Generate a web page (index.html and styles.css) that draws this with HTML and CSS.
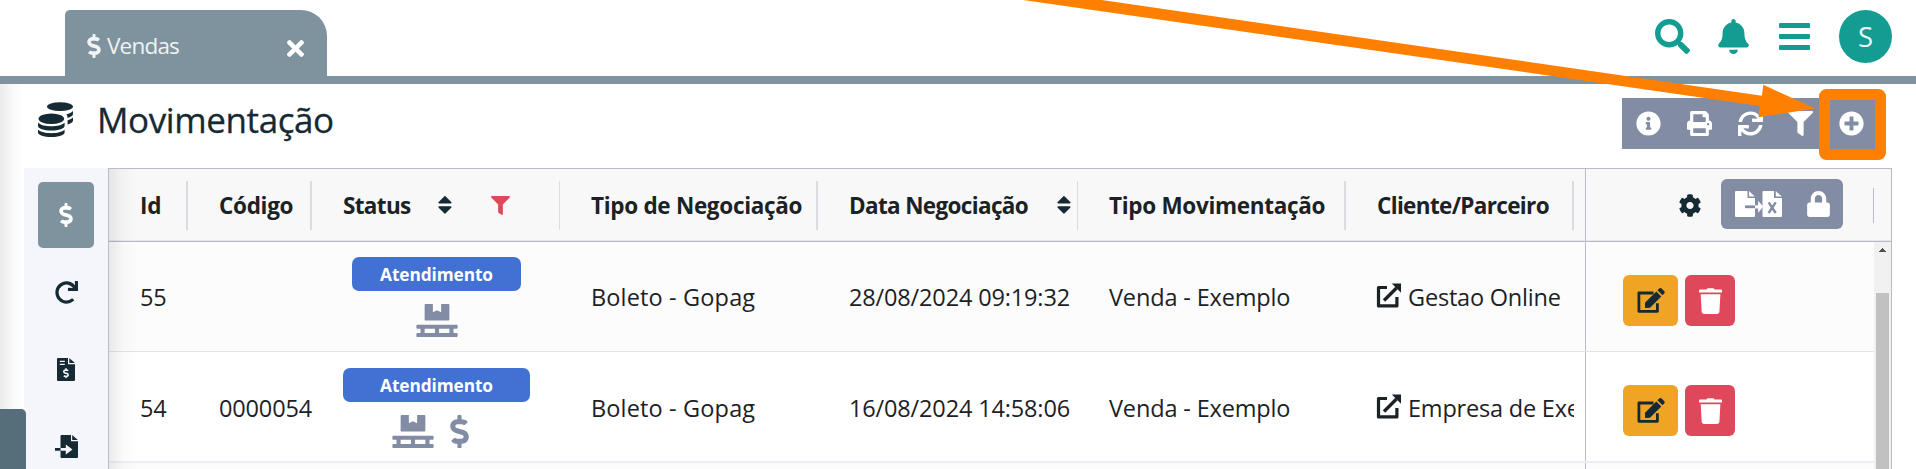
FILE: index.html
```
<!DOCTYPE html>
<html lang="pt-BR">
<head>
<meta charset="utf-8">
<title>Vendas - Movimentação</title>
<link rel="stylesheet" href="styles.css">
</head>
<body>
<svg class="defs" aria-hidden="true">
  <symbol id="dollar" viewBox="0 0 288 512"><path d="M209.2 233.4l-108-31.6C88.7 198.2 80 186.5 80 173.5c0-16.3 13.2-29.5 29.5-29.5h66.3c12.2 0 24.2 3.7 34.2 10.5 6.1 4.1 14.3 3.1 19.5-2l34.8-34c7.1-6.9 6.1-18.4-1.8-24.5C238 74.8 207.4 64.1 176 64V16c0-8.8-7.2-16-16-16h-32c-8.8 0-16 7.2-16 16v48h-2.5C45.8 64-5.4 118.7.5 183.6c4.2 46.1 39.4 83.6 83.8 96.6l102.5 30c12.5 3.7 21.2 15.3 21.2 28.3 0 16.3-13.2 29.5-29.5 29.5h-66.3C100 368 88 364.3 78 357.5c-6.1-4.1-14.3-3.1-19.5 2l-34.8 34c-7.1 6.9-6.1 18.4 1.8 24.5 24.5 19.2 55.1 29.9 86.5 30v48c0 8.8 7.2 16 16 16h32c8.8 0 16-7.2 16-16v-48.2c46.6-.9 90.3-28.6 105.7-72.7 21.5-61.6-14.6-124.8-72.5-141.7z"/></symbol>
  <symbol id="times" viewBox="0 0 352 352"><path transform="translate(0 -80)" d="M242.72 256l100.07-100.07c12.28-12.28 12.28-32.19 0-44.48l-22.24-22.24c-12.28-12.28-32.19-12.28-44.48 0L176 189.28 75.93 89.21c-12.28-12.28-32.19-12.28-44.48 0L9.21 111.45c-12.28 12.28-12.28 32.19 0 44.48L109.28 256 9.21 356.07c-12.28 12.28-12.28 32.19 0 44.48l22.24 22.24c12.28 12.28 32.2 12.28 44.48 0L176 322.72l100.07 100.07c12.28 12.28 32.2 12.28 44.48 0l22.24-22.24c12.28-12.28 12.28-32.19 0-44.48L242.72 256z"/></symbol>
  <symbol id="pallet" viewBox="0 0 640 512"><path d="M144 256h352c8.800 0 16-7.200 16-16V16c0-8.800-7.200-16-16-16H384v128l-64-32-64 32V0H144c-8.800 0-16 7.200-16 16v224c0 8.800 7.200 16 16 16zm480 128c8.800 0 16-7.200 16-16v-32c0-8.800-7.200-16-16-16H16c-8.800 0-16 7.200-16 16v32c0 8.800 7.200 16 16 16h48v64H16c-8.800 0-16 7.200-16 16v32c0 8.800 7.200 16 16 16h608c8.800 0 16-7.200 16-16v-32c0-8.800-7.200-16-16-16h-48v-64h48zm-336 64H128v-64h160v64zm224 0H352v-64h160v64z"/></symbol>
  <symbol id="filter" viewBox="0 0 512 512"><path d="M487.976 0H24.028C2.71 0-8.047 25.866 7.058 40.971L192 225.941V432c0 7.831 3.821 15.17 10.237 19.662l80 55.98C298.02 518.69 320 507.493 320 487.98V225.941l184.947-184.97C520.021 25.896 509.338 0 487.976 0z"/></symbol>
  <symbol id="sort" viewBox="0 0 14 18"><path d="M6.200.4a1 1 0 0 1 1.500 0l5.500 5.700c.7.700.3 1.500-.6 1.500H1.300c-.9 0-1.300-.8-.6-1.500zM1.300 10.300h11.300c.9 0 1.300.8.600 1.500l-5.500 5.500a1 1 0 0 1-1.500 0L.7 11.800c-.7-.7-.3-1.500.6-1.500z"/></symbol>
  <symbol id="external" viewBox="0 0 25 25"><path d="M11 4.500H2.500v18.400h18.400V14" fill="none" stroke="currentColor" stroke-width="3.200" stroke-linejoin="round"/><path d="M8 17.500 20.500 5" fill="none" stroke="currentColor" stroke-width="3.400"/><path d="M15.800.5H25v9.200z"/></symbol>
  <symbol id="edit" viewBox="0 0 28 25"><path d="M16.500 5H1.900v18.300h18.500v-8" fill="none" stroke="currentColor" stroke-width="2.800" stroke-linejoin="round"/><path d="M8 20v-5.200L19.300 3.500l5 5L13 19.800zM20.500 2.300l1.600-1.700c.8-.8 1.800-.8 2.500 0l2.500 2.500c.8.800.8 1.800 0 2.500l-1.600 1.700z"/></symbol>
  <symbol id="trash" viewBox="0 0 23 26"><path d="M1 1.500h6.500L8.300.3h6.400l.8 1.200H22a1 1 0 0 1 1 1v2H0v-2a1 1 0 0 1 1-1zM1.700 6.200h19.700l-1 17.600c-.1 1.300-1 2.200-2.300 2.200H5c-1.300 0-2.200-.9-2.300-2.200z"/></symbol>
</svg>

<header class="topbar">
  <div class="tab">
    <svg class="tab-icon"><use href="#dollar"/></svg>
    <span class="tab-label">Vendas</span>
    <svg class="tab-close"><use href="#times"/></svg>
  </div>
  <nav class="top-actions">
    <svg class="ico-search" viewBox="0 0 512 512"><path d="M505 442.7L405.3 343c-4.500-4.500-10.600-7-17-7H372c27.600-35.300 44-79.700 44-128C416 93.100 322.900 0 208 0S0 93.100 0 208s93.100 208 208 208c48.300 0 92.700-16.400 128-44v16.300c0 6.400 2.500 12.500 7 17l99.700 99.700c9.400 9.400 24.600 9.400 33.900 0l28.300-28.300c9.400-9.400 9.400-24.600.1-34zM208 336c-70.700 0-128-57.200-128-128 0-70.700 57.200-128 128-128 70.700 0 128 57.200 128 128 0 70.700-57.200 128-128 128z"/></svg>
    <svg class="ico-bell" viewBox="0 0 448 512"><path d="M224 512c35.320 0 63.970-28.650 63.970-64H160.030c0 35.350 28.650 64 63.970 64zm215.390-149.710c-19.320-20.760-55.470-51.990-55.470-154.290 0-77.700-54.480-139.900-127.940-155.160V32c0-17.670-14.320-32-31.980-32s-31.980 14.330-31.980 32v20.840C118.560 68.100 64.080 130.300 64.080 208c0 102.300-36.150 133.530-55.470 154.290-6 6.450-8.660 14.160-8.610 21.710.11 16.400 12.980 32 32.100 32h383.800c19.120 0 32-15.600 32.100-32 .05-7.550-2.610-15.270-8.610-21.710z"/></svg>
    <svg class="ico-bars" viewBox="0 0 31 27"><rect width="31" height="5" rx="1"/><rect y="11" width="31" height="5" rx="1"/><rect y="22" width="31" height="5" rx="1"/></svg>
    <span class="avatar">S</span>
  </nav>
</header>

<div class="page">
  <aside class="edge"><div class="edge-handle"></div></aside>
  <main class="main">
    <div class="heading">
      <svg class="ico-coins" viewBox="0 0 35 35">
        <ellipse cx="22" cy="4.600" rx="13" ry="4.400"/>
        <path d="M28.300 12.300c3-.6 5.400-1.700 6.700-3.200v2.800c0 1.700-2.200 3.200-5.500 4 0-1.500-.3-2.600-1.200-3.600zM29.600 18.300c2.300-.6 4.300-1.500 5.400-2.700v2.800c0 1.700-2.200 3.200-5.400 4z"/>
        <ellipse cx="13.300" cy="16.700" rx="12.800" ry="5.300"/>
        <path d="M0 20.700c2.600 2.300 7.600 3.600 13.300 3.600s10.700-1.300 13.300-3.600v3.200c0 2.500-6 4.600-13.300 4.600S0 26.400 0 23.900zM0 27.800c2.600 2.100 7.600 3.400 13.300 3.400s10.700-1.300 13.300-3.400v2.600c0 2.500-6 4.600-13.300 4.600S0 32.900 0 30.400z"/>
      </svg>
      <h1>Movimentação</h1>
      <div class="toolbar">
        <svg viewBox="0 0 512 512"><path d="M256 8C119.043 8 8 119.083 8 256c0 136.997 111.043 248 248 248s248-111.003 248-248C504 119.083 392.957 8 256 8zm0 110c23.196 0 42 18.804 42 42s-18.804 42-42 42-42-18.804-42-42 18.804-42 42-42zm56 254c0 6.627-5.373 12-12 12h-88c-6.627 0-12-5.373-12-12v-24c0-6.627 5.373-12 12-12h12v-64h-12c-6.627 0-12-5.373-12-12v-24c0-6.627 5.373-12 12-12h64c6.627 0 12 5.373 12 12v100h12c6.627 0 12 5.373 12 12v24z"/></svg>
        <svg viewBox="0 0 512 512"><path d="M448 192V77.250c0-8.490-3.370-16.620-9.370-22.630L393.370 9.370c-6-6-14.140-9.370-22.630-9.370H96C78.330 0 64 14.330 64 32v160c-35.350 0-64 28.650-64 64v112c0 8.840 7.160 16 16 16h48v96c0 17.670 14.330 32 32 32h320c17.670 0 32-14.330 32-32v-96h48c8.840 0 16-7.160 16-16V256c0-35.350-28.650-64-64-64zm-64 256H128v-96h256v96zm0-224H128V64h192v48c0 8.840 7.160 16 16 16h48v96zm48 72c-13.250 0-24-10.750-24-24 0-13.260 10.750-24 24-24s24 10.740 24 24c0 13.250-10.750 24-24 24z"/></svg>
        <svg viewBox="0 0 512 512"><path d="M440.650 12.570l4 82.770A247.160 247.160 0 0 0 255.830 8C134.730 8 33.910 94.920 12.290 209.820A12 12 0 0 0 24.090 224h49.050a12 12 0 0 0 11.670-9.260 175.910 175.910 0 0 1 317-56.940l-101.460-4.860a12 12 0 0 0-12.570 12v47.410a12 12 0 0 0 12 12H500a12 12 0 0 0 12-12V12a12 12 0 0 0-12-12h-47.370a12 12 0 0 0-11.980 12.570zM255.830 432a175.610 175.610 0 0 1-146-77.800l101.800 4.870a12 12 0 0 0 12.570-12v-47.400a12 12 0 0 0-12-12H12a12 12 0 0 0-12 12V500a12 12 0 0 0 12 12h47.350a12 12 0 0 0 12-12.600l-4.150-82.570A247.170 247.170 0 0 0 255.830 504c121.110 0 221.930-86.920 243.550-201.820a12 12 0 0 0-11.800-14.180h-49.050a12 12 0 0 0-11.670 9.260A175.860 175.860 0 0 1 255.830 432z"/></svg>
        <svg><use href="#filter"/></svg>
        <svg viewBox="0 0 512 512"><path d="M256 8C119 8 8 119 8 256s111 248 248 248 248-111 248-248S393 8 256 8zm144 276c0 6.600-5.400 12-12 12h-92v92c0 6.600-5.400 12-12 12h-56c-6.600 0-12-5.400-12-12v-92h-92c-6.600 0-12-5.400-12-12v-56c0-6.600 5.400-12 12-12h92v-92c0-6.600 5.400-12 12-12h56c6.600 0 12 5.400 12 12v92h92c6.600 0 12 5.400 12 12v56z"/></svg>
      </div>
    </div>

    <div class="content">
      <nav class="sidebar">
        <span class="side-item active"><svg class="side-dollar"><use href="#dollar"/></svg></span>
        <span class="side-item"><svg class="side-redo" viewBox="0 0 512 512"><path d="M500.330 0h-47.410a12 12 0 0 0-12 12.570l4 82.760A247.420 247.420 0 0 0 256 8C119.340 8 7.900 119.530 8 256.190 8.100 393.070 119.100 504 256 504a247.100 247.100 0 0 0 166.180-63.910 12 12 0 0 0 .48-17.430l-34-34a12 12 0 0 0-16.380-.55A176 176 0 1 1 402.100 157.800l-101.530-4.870a12 12 0 0 0-12.570 12v47.410a12 12 0 0 0 12 12h200.330a12 12 0 0 0 12-12V12a12 12 0 0 0-12-12z"/></svg></span>
        <span class="side-item"><svg class="side-file" viewBox="0 0 18 23"><path fill-rule="evenodd" d="M1 0h10v6.200h7V22a1 1 0 0 1-1 1H1a1 1 0 0 1-1-1V1a1 1 0 0 1 1-1zM2.800 2.800v1.300h5V2.800zm0 3v1.300h5V5.800z"/><path d="M12.300 0 17.800 5h-5.500z"/><svg x="6" y="10" width="6" height="10.500" class="cut"><use href="#dollar"/></svg></svg></span>
        <span class="side-item"><svg class="side-import" viewBox="0 0 23 23"><path d="M6.500 0H16v6.200h7V22a1 1 0 0 1-1 1H6.500a1 1 0 0 1-1-1V1a1 1 0 0 1 1-1zM0 13h5.500v2.700H0z"/><path d="M17.200 0 22.800 5h-5.600z"/><path class="cut" d="M5.500 13h5.300V9.500l6.700 4.900-6.700 5v-3.700H5.500z"/></svg></span>
      </nav>

      <section class="grid">
        <div class="row head">
          <div class="cell">Id</div>
          <div class="cell">Código</div>
          <div class="cell thin tight">Status<svg class="sort sort-status"><use href="#sort"/></svg><svg class="filtered"><use href="#filter"/></svg></div>
          <div class="cell">Tipo de Negociação</div>
          <div class="cell thin tight">Data Negociação<svg class="sort sort-date"><use href="#sort"/></svg></div>
          <div class="cell">Tipo Movimentação</div>
          <div class="cell tight">Cliente/Parceiro</div>
          <div class="pinned">
            <svg class="ico-cog" viewBox="16 0 480 512"><path d="M487.400 315.700l-42.600-24.600c4.300-23.200 4.300-47 0-70.200l42.600-24.600c4.900-2.800 7.100-8.600 5.500-14-11.100-35.600-30-67.800-54.700-94.600-3.800-4.100-10-5.100-14.800-2.300L380.800 110c-17.900-15.400-38.500-27.300-60.800-35.100V25.800c0-5.600-3.900-10.500-9.400-11.700-36.700-8.200-74.300-7.800-109.200 0-5.500 1.200-9.400 6.100-9.400 11.700V75c-22.200 7.900-42.800 19.800-60.800 35.100L88.700 85.500c-4.900-2.800-11-1.900-14.800 2.300-24.700 26.700-43.600 58.900-54.700 94.600-1.700 5.400.6 11.200 5.500 14L67.300 221c-4.300 23.200-4.300 47 0 70.200l-42.600 24.600c-4.900 2.800-7.100 8.600-5.500 14 11.100 35.600 30 67.800 54.700 94.600 3.800 4.100 10 5.100 14.800 2.300l42.600-24.600c17.900 15.400 38.500 27.300 60.800 35.100v49.200c0 5.600 3.900 10.500 9.400 11.700 36.700 8.200 74.300 7.800 109.200 0 5.500-1.200 9.400-6.100 9.400-11.700v-49.200c22.200-7.900 42.800-19.800 60.800-35.100l42.600 24.600c4.900 2.800 11 1.900 14.800-2.300 24.700-26.700 43.600-58.900 54.700-94.600 1.500-5.500-.7-11.300-5.600-14.100zM256 336c-44.100 0-80-35.900-80-80s35.900-80 80-80 80 35.900 80 80-35.900 80-80 80z"/></svg>
            <div class="group">
              <svg class="ico-export" viewBox="0 0 47 26">
                <path d="M1 0h11.500v7H20v18a1 1 0 0 1-1 1H1a1 1 0 0 1-1-1V1a1 1 0 0 1 1-1zM14 0l5.800 5.600H14z"/>
                <path class="cut" d="M10 14.400h10v2.800H10z"/>
                <path d="M28.500 0h10.500v7h8v18a1 1 0 0 1-1 1H28.500a1 1 0 0 1-1-1V1a1 1 0 0 1 1-1zM40.800 0l6 5.600h-6z"/>
                <path d="M20 14.200h3.200V9.800l5 6-5 6v-4.400H20z"/>
                <path d="m33.700 11.300 7 10.700m0-10.700-7 10.700" fill="none" class="cut-line"/>
              </svg>
              <svg class="ico-lock" viewBox="0 0 448 512"><path d="M400 224h-24v-72C376 68.200 307.800 0 224 0S72 68.200 72 152v72H48c-26.500 0-48 21.500-48 48v192c0 26.500 21.500 48 48 48h352c26.500 0 48-21.500 48-48V272c0-26.500-21.500-48-48-48zm-104 0H152v-72c0-39.700 32.300-72 72-72s72 32.300 72 72v72z"/></svg>
            </div>
            <span class="head-end"></span>
          </div>
        </div>

        <div class="body">
          <div class="rows">
            <div class="row odd">
              <div class="cell">55</div>
              <div class="cell"></div>
              <div class="cell status"><span class="badge">Atendimento</span><span class="marks"><svg class="mark-pallet"><use href="#pallet"/></svg></span></div>
              <div class="cell loose">Boleto - Gopag</div>
              <div class="cell">28/08/2024 09:19:32</div>
              <div class="cell">Venda - Exemplo</div>
              <div class="cell client"><svg class="ext"><use href="#external"/></svg><span>Gestao Online</span></div>
              <div class="pinned"><span class="btn edit"><svg><use href="#edit"/></svg></span><span class="btn del"><svg><use href="#trash"/></svg></span></div>
            </div>
            <div class="row second">
              <div class="cell">54</div>
              <div class="cell">0000054</div>
              <div class="cell status"><span class="badge wide">Atendimento</span><span class="marks pair"><svg class="mark-pallet"><use href="#pallet"/></svg><svg class="mark-dollar"><use href="#dollar"/></svg></span></div>
              <div class="cell loose">Boleto - Gopag</div>
              <div class="cell">16/08/2024 14:58:06</div>
              <div class="cell">Venda - Exemplo</div>
              <div class="cell client"><svg class="ext"><use href="#external"/></svg><span>Empresa de Exemplo</span></div>
              <div class="pinned"><span class="btn edit"><svg><use href="#edit"/></svg></span><span class="btn del"><svg><use href="#trash"/></svg></span></div>
            </div>
            <div class="row odd">
              <div class="cell"></div><div class="cell"></div><div class="cell"></div><div class="cell"></div><div class="cell"></div><div class="cell"></div><div class="cell"></div>
              <div class="pinned"></div>
            </div>
          </div>
          <div class="scrollbar">
            <svg viewBox="0 0 7 4"><path d="M3 0h1v1h1v1h1v1h1v1H0V3h1V2h1V1h1z"/></svg>
            <div class="thumb"></div>
          </div>
        </div>
      </section>
    </div>
  </main>
</div>

<svg class="annotation" viewBox="0 0 1916 469">
  <path d="M1023 0h78.700l660.200 95.700 1.400-11 51.700 23.800-56.500 8.700 1.400-11.200z"/>
  <rect x="1824.500" y="94.500" width="56" height="60" rx="2" fill="none"/>
</svg>
</body>
</html>
```
FILE: styles.css
```
* { box-sizing: border-box; }

body {
  margin: 0;
  width: 1916px;
  height: 469px;
  overflow: hidden;
  background: #fff;
  color: #1b2226;
  font-family: "Open Sans", "Noto Sans", sans-serif;
  display: flex;
  flex-direction: column;
}

svg { display: block; flex: none; fill: currentColor; }
.defs { position: absolute; width: 0; height: 0; }

/* Top bar */
.topbar {
  height: 84px;
  flex: none;
  border-bottom: 8px solid #7e939d;
  padding: 10px 24px 0 65px;
  display: flex;
  justify-content: space-between;
  align-items: flex-start;
}
.tab {
  width: 262px;
  height: 66px;
  border-radius: 5px 26px 0 0;
  background: #7e939d;
  color: #f0f2f3;
  padding: 0 23px 0 22px;
  display: flex;
  align-items: center;
}
.tab-icon { width: 14px; height: 24px; margin: 5px 6px 0 0; }
.tab-label { font-size: 22.5px; letter-spacing: -.8px; margin-top: 5px; }
.tab-close { width: 17px; height: 17px; margin: 10px 0 0 auto; color: #fff; }
.top-actions { display: flex; align-items: center; color: #139d92; }
.ico-search { width: 35px; height: 35px; margin-right: 28px; }
.ico-bell { width: 31px; height: 35px; margin-right: 30px; }
.ico-bars { width: 31px; height: 27px; margin-right: 29px; }
.avatar {
  width: 53px;
  height: 53px;
  border-radius: 50%;
  background: #139d92;
  color: #eef5f5;
  font-size: 27.5px;
  line-height: 54px;
  text-align: center;
}

/* Page frame */
.page { flex: 1; min-height: 0; display: flex; }
.edge {
  width: 24px;
  flex: none;
  display: flex;
  align-items: flex-end;
  background: linear-gradient(to right, #ebebeb, #f8f8f8 12px, #fff);
}
.edge-handle {
  width: 26px;
  flex: none;
  height: 60px;
  border-radius: 0 5px 0 0;
  background: #566e79;
  position: relative;
  z-index: 1;
}
.main { flex: 1; min-width: 0; display: flex; flex-direction: column; }
.heading {
  height: 84px;
  flex: none;
  padding: 14px 41px 0 14px;
  display: flex;
  align-items: flex-start;
  color: #162a33;
}
.ico-coins { width: 35px; height: 35px; margin: 4px 24px 0 0; }
h1 { margin: -2px 0 0; font-size: 35px; line-height: 48px; font-weight: 400; letter-spacing: -.4px; -webkit-text-stroke: .3px; }
.toolbar {
  width: 253px;
  height: 51px;
  margin-left: auto;
  background: #828da4;
  color: #fff;
  padding: 0 11px 0 14px;
  display: flex;
  align-items: center;
  justify-content: space-between;
}
.toolbar svg { width: 25px; height: 25px; }

.content { flex: 1; min-height: 0; display: flex; padding-right: 24px; }
.sidebar {
  width: 84px;
  flex: none;
  padding-top: 14px;
  background: #f4f6fb;
  color: #162a33;
  display: flex;
  flex-direction: column;
  align-items: center;
  gap: 11px;
}
.side-item { width: 56px; height: 66px; flex: none; border-radius: 5px; display: flex; align-items: center; justify-content: center; }
.side-item.active { background: #7e939d; color: #fff; }
.side-dollar { width: 14px; height: 24px; }
.side-redo, .side-import { width: 23px; height: 23px; }
.side-file { width: 18px; height: 23px; }
.sidebar .cut { fill: #f4f6fb; }

/* Data grid */
.grid {
  flex: 1;
  min-width: 0;
  border: 1px solid #b8bcc9;
  border-bottom: 0;
  display: flex;
  flex-direction: column;
  position: relative;
}
.grid::before {
  content: "";
  position: absolute;
  inset: 0 auto 0 0;
  width: 28px;
  background: linear-gradient(to right, rgba(0, 0, 0, .08), rgba(0, 0, 0, .02) 14px, transparent);
}
.row {
  display: grid;
  grid-template-columns: 79px 124px 248px 258px 260px 268px 228px 1fr;
}
.cell {
  min-width: 0;
  padding-left: 31px;
  display: flex;
  align-items: center;
  white-space: nowrap;
  font-size: 23.5px;
  font-weight: 370;
  letter-spacing: -.15px;
}
.head {
  height: 73px;
  flex: none;
  background: #f8f8f8;
  border-bottom: 1px solid #b8bcc9;
  box-shadow: inset 0 -1px #e4e6ea;
  align-items: center;
}
.head .cell {
  height: 49px;
  padding-top: 1px;
  border-right: 2px solid #d9dde1;
  font-size: 22.5px;
  font-weight: 700;
  letter-spacing: -.3px;
}
.head .cell.thin { border-right-width: 1px; }
.head .cell.tight { letter-spacing: -.65px; }
.sort { width: 14px; height: 18px; color: #162a33; }
.sort-status { margin: -2px 39px 0 27px; }
.sort-date { margin: -2px 0 0 auto; }
.head .thin:has(.sort-date) { padding-right: 6px; }
.filtered { width: 19px; height: 19px; color: #df485b; }

.body { flex: 1; min-height: 0; display: flex; overflow: hidden; }
.rows { flex: 1; }
.rows .row { height: 110px; border-bottom: 1px solid #e2e4ec; }
.odd { background: #fcfcfc; }
.rows .second { border-bottom: 2px solid #ebeff4; height: 111px; }
.second .cell { padding-top: 2px; }
.loose { letter-spacing: .15px; }
.row .status { flex-direction: column; padding: 15px 0 0; width: 187px; margin-left: 31px; gap: 13px; }
.second .status { padding-top: 16px; }
.badge {
  width: 169px;
  height: 34px;
  flex: none;
  border-radius: 7px;
  background: #4171d3;
  color: #fff;
  font-size: 17.3px;
  line-height: 36px;
  font-weight: 700;
  letter-spacing: -.1px;
  text-align: center;
}
.badge.wide { width: 187px; }
.marks { display: flex; gap: 16px; color: #828da4; }
.marks.pair { padding-right: 12px; }
.mark-pallet { width: 42px; height: 33px; }
.mark-dollar { width: 19px; height: 33px; }
.client { overflow: hidden; padding-left: 30px; }
.client span { letter-spacing: -.2px; }
.ext { width: 25px; height: 25px; margin: -2px 7px 0 0; }

.pinned {
  align-self: stretch;
  margin-left: 11px;
  border-left: 1px solid #b8bcc9;
  padding-left: 37px;
  display: flex;
  align-items: center;
  gap: 7px;
}
.btn { height: 51px; margin-top: 8px; border-radius: 6px; display: flex; align-items: center; justify-content: center; }
.edit { width: 55px; background: #f0a423; color: #162a33; }
.edit svg { width: 28px; height: 25px; }
.del { width: 50px; background: #df485b; color: #fff; }
.del svg { width: 23px; height: 26px; }

.head .pinned { padding: 0 17px 0 93px; gap: 0; color: #162a33; }
.ico-cog { width: 22px; height: 23px; }
.group {
  width: 122px;
  height: 50px;
  margin-left: 20px;
  margin-top: -2px;
  padding: 0 13px 0 14px;
  border-radius: 6px;
  background: #828da4;
  color: #fff;
  display: flex;
  align-items: center;
  justify-content: space-between;
}
.ico-export { width: 47px; height: 26px; }
.ico-export .cut { fill: #828da4; }
.ico-export .cut-line { stroke: #828da4; stroke-width: 2.4; }
.ico-lock { width: 23px; height: 26px; }
.head-end { width: 1px; height: 35px; margin-left: auto; background: #b8bcc9; }

.scrollbar {
  width: 17px;
  flex: none;
  background: #f1f1f1;
  display: flex;
  flex-direction: column;
  align-items: center;
  padding-top: 6px;
}
.scrollbar svg { width: 7px; height: 4px; color: #505050; }
.thumb { width: 13px; flex: 1; margin-top: 41px; background: #c1c1c1; }

/* Callout pointing at the add button */
.annotation { position: absolute; left: 0; top: 0; width: 1916px; height: 469px; color: #ff8000; }
.annotation rect { stroke: #ff8000; stroke-width: 11; }
```
